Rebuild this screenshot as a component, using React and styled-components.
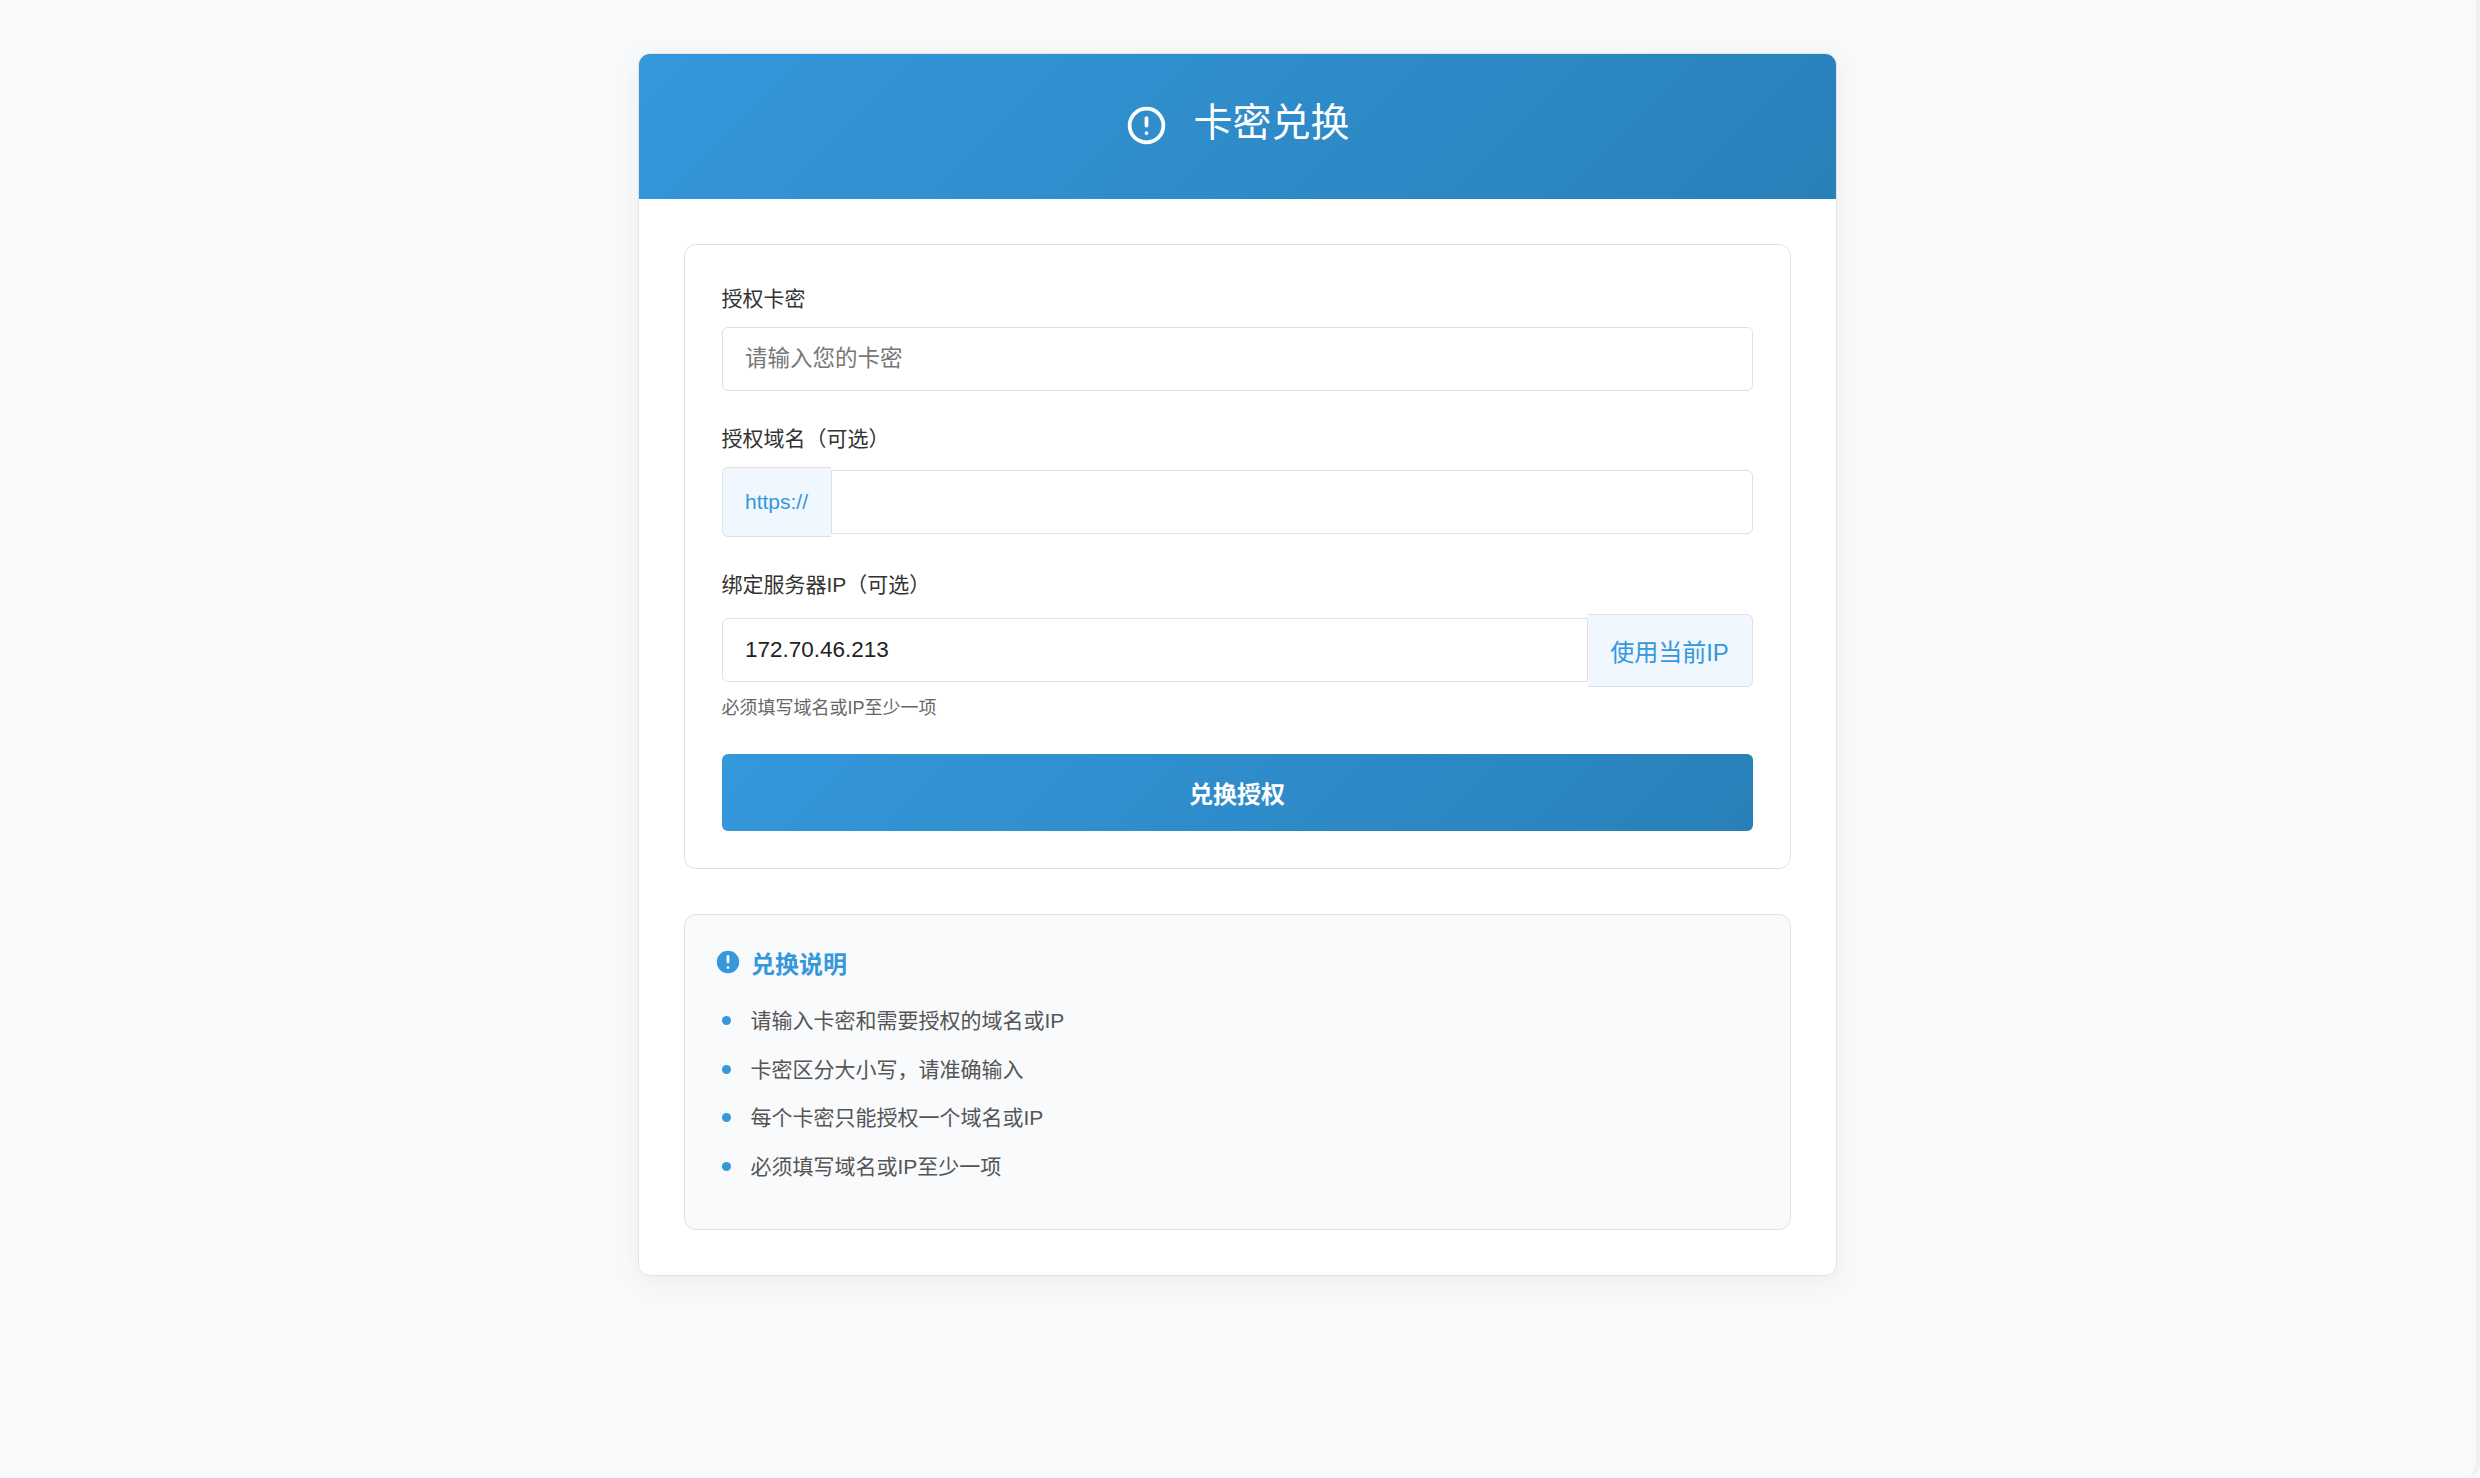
import React from "react";
import styled, { createGlobalStyle } from "styled-components";

const Global = createGlobalStyle`
  html, body { margin: 0; padding: 0; height: 100%; overflow: hidden; }
  body {
    background: #f8f9fa;
    font-family: "Liberation Sans", "Noto Sans CJK SC", sans-serif;
    color: #333;
  }
  * { box-sizing: border-box; }
`;

const Page = styled.div`
  height: 1478px;
  border-right: 4px solid #eef0f2;
  border-bottom-right-radius: 16px;
  padding: 53px 2px 0 0;
  display: flex;
  justify-content: center;
  align-items: flex-start;
`;

const Card = styled.main`
  width: 1199px;
  background: #fff;
  border: 1.5px solid #e4e4e4;
  border-radius: 12px;
  box-shadow: 0 6px 24px rgba(0, 0, 0, 0.05);
  overflow: hidden;
`;

const Header = styled.header`
  height: 145px;
  background: linear-gradient(135deg, #3498db, #2980b9);
  color: #fff;
  display: flex;
  align-items: center;
  justify-content: center;
  gap: 24px;
  & > svg {
    position: relative;
    top: -1.5px;
  }
`;

const Title = styled.h1`
  margin: 0;
  font-size: 39px;
  font-weight: 400;
  line-height: 1;
  position: relative;
  top: -4px;
`;

const Body = styled.div`
  padding: 45px;
  display: flex;
  flex-direction: column;
  gap: 45px;
`;

const FormPanel = styled.form`
  border: 1.5px solid #e0e0e0;
  border-radius: 12px;
  padding: 38.5px 37px 36.5px;
  display: flex;
  flex-direction: column;
`;

const Label = styled.label`
  display: block;
  font-size: 21px;
  line-height: 30px;
  margin-bottom: 13.5px;
  color: #333;
`;

const Field = styled.div`
  margin-bottom: ${(p) => p.$mb}px;
`;

const TextInput = styled.input`
  display: block;
  flex: 1;
  width: 100%;
  min-width: 0;
  height: 64px;
  padding: 0 22.5px;
  font: inherit;
  font-size: 22.5px;
  color: #222;
  background: #fff;
  border: 1.5px solid #e0e0e0;
  border-radius: ${(p) => p.$radius || "6px"};
  outline: none;
  &::placeholder { color: #777; opacity: 1; }
`;

const Group = styled.div`
  display: flex;
  align-items: center;
`;

const Prefix = styled.span`
  flex: none;
  width: 109px;
  height: 70px;
  display: flex;
  align-items: center;
  justify-content: center;
  background: #f0f7ff;
  color: #3498db;
  font-size: 21px;
  border: 1.5px solid #e0e0e0;
  border-right: 0;
  border-radius: 6px 0 0 6px;
`;

const SideButton = styled.button`
  flex: none;
  width: 165px;
  height: 73px;
  padding: 0;
  font: inherit;
  font-size: 24px;
  color: #3498db;
  background: #f0f7ff;
  border: 1.5px solid #e0e0e0;
  border-left: 0;
  border-radius: 0 6px 6px 0;
`;

const Hint = styled.p`
  margin: 8px 0 0;
  font-size: 18px;
  line-height: 27px;
  color: #666;
`;

const Submit = styled.button`
  height: 77px;
  width: 100%;
  border: 0;
  border-radius: 6px;
  background: linear-gradient(135deg, #3498db, #2980b9);
  color: #fff;
  font: inherit;
  font-size: 24px;
  font-weight: 700;
`;

const InfoPanel = styled.section`
  height: 316px;
  background: #f9fafc;
  border: 1.5px solid #e0e0e0;
  border-radius: 12px;
  padding: 32px 30px 0 32px;
`;

const InfoHead = styled.h3`
  margin: 0 0 12.5px;
  display: flex;
  align-items: center;
  gap: 9.5px;
  color: #3498db;
  font-size: 24px;
  line-height: 36px;
  font-weight: 700;
`;

const InfoIcon = styled.svg`
  width: 28px;
  height: 28px;
  flex: none;
  margin-left: -3px;
  position: relative;
  top: -3px;
`;

const List = styled.ul`
  margin: 0;
  padding: 0;
  list-style: none;
`;

const Item = styled.li`
  display: flex;
  align-items: center;
  height: 48.6px;
  gap: 20px;
  font-size: 21px;
  color: #555;
  &::before {
    content: "";
    flex: none;
    width: 9px;
    height: 9px;
    margin: 3px 0 0 5px;
    border-radius: 50%;
    background: #3498db;
  }
`;

const HeaderIcon = () => (
  <svg width="45" height="45" viewBox="0 0 24 24" fill="none" stroke="currentColor" strokeWidth="2" strokeLinecap="round" strokeLinejoin="round">
    <path d="M12 8v4m0 4h.01M21 12a9 9 0 11-18 0 9 9 0 0118 0z" />
  </svg>
);

const items = [
  "请输入卡密和需要授权的域名或IP",
  "卡密区分大小写，请准确输入",
  "每个卡密只能授权一个域名或IP",
  "必须填写域名或IP至少一项",
];

export default function App() {
  return (
    <>
      <Global />
      <Page>
        <Card>
          <Header>
            <HeaderIcon />
            <Title>卡密兑换</Title>
          </Header>
          <Body>
            <FormPanel>
              <Field $mb={32.5}>
                <Label>授权卡密</Label>
                <TextInput placeholder="请输入您的卡密" />
              </Field>
              <Field $mb={33}>
                <Label>授权域名（可选）</Label>
                <Group>
                  <Prefix>https://</Prefix>
                  <TextInput $radius="0 6px 6px 0" />
                </Group>
              </Field>
              <Field $mb={32.5}>
                <Label>绑定服务器IP（可选）</Label>
                <Group>
                  <TextInput $radius="6px 0 0 6px" defaultValue="172.70.46.213" />
                  <SideButton type="button">使用当前IP</SideButton>
                </Group>
                <Hint>必须填写域名或IP至少一项</Hint>
              </Field>
              <Submit type="button">兑换授权</Submit>
            </FormPanel>
            <InfoPanel>
              <InfoHead>
                <InfoIcon viewBox="0 0 20 20" fill="currentColor">
                  <path fillRule="evenodd" clipRule="evenodd" d="M18 10a8 8 0 11-16 0 8 8 0 0116 0zm-7 4a1 1 0 11-2 0 1 1 0 012 0zm-1-9a1 1 0 00-1 1v4a1 1 0 102 0V6a1 1 0 00-1-1z" />
                </InfoIcon>
                兑换说明
              </InfoHead>
              <List>
                {items.map((t) => (
                  <Item key={t}>{t}</Item>
                ))}
              </List>
            </InfoPanel>
          </Body>
        </Card>
      </Page>
    </>
  );
}
